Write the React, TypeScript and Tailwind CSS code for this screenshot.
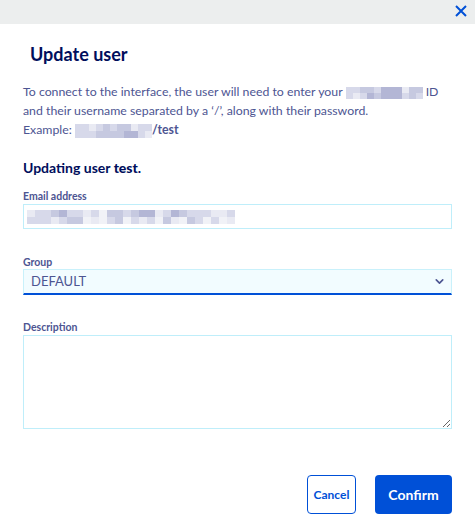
import { ChevronDown } from 'lucide-react'

// pixelated placeholder cells (redacted content)
const SHADES = ['bg-[#e9eaf3]', 'bg-[#d7d9ea]', 'bg-[#c6c9e0]', 'bg-[#b3b6d5]', 'bg-[#f1f2f7]']

function Redacted({ rows, cell }: { rows: number[][]; cell: string }) {
  return (
    <span className="inline-flex flex-col align-middle">
      {rows.map((row, r) => (
        <span key={r} className="flex">
          {row.map((c, i) => (
            <span key={i} className={`${cell} ${SHADES[c]}`} />
          ))}
        </span>
      ))}
    </span>
  )
}

const ID_ROWS = [
  [1, 1, 2, 2, 1, 3, 3, 3, 0, 2, 2],
  [1, 0, 1, 3, 2, 3, 3, 3, 1, 2, 1],
]
const EXAMPLE_ROWS = [
  [1, 1, 0, 1, 2, 1, 2, 2, 0, 1, 1],
  [1, 1, 1, 2, 2, 2, 2, 3, 3, 1, 0],
]
const EMAIL_ROWS = [
  [0, 1, 1, 2, 3, 1, 1, 0, 1, 4, 2, 2, 1, 2, 3, 3, 0, 1, 3, 2, 1, 1, 1, 0, 0, 1],
  [1, 1, 1, 0, 1, 2, 2, 4, 0, 4, 1, 2, 4, 1, 0, 1, 4, 2, 0, 4, 2, 1, 4, 1, 4, 0],
]

export default function App() {
  return (
    <div className="w-[475px] h-[531px] bg-white font-['Lato','Liberation_Sans',sans-serif] text-[#4d5592]">
      {/* top bar */}
      <div className="h-6 bg-[#eceeee] flex justify-end items-center pr-[8px]">
        <svg width="12" height="12" viewBox="0 0 12 12" className="text-[#0050d7] -mt-[3px]">
          <path d="M1 1 L11 11 M11 1 L1 11" stroke="currentColor" strokeWidth="2" />
        </svg>
      </div>

      <div className="px-[23px]">
        <h2 className="mt-[18px] pl-[7px] text-[18px] leading-6 font-bold text-[#000e5c]">Update user</h2>

        <p className="mt-4 text-[12.3px] leading-[19px] whitespace-nowrap">
          To connect to the interface, the user will need to enter your{' '}
          <Redacted rows={ID_ROWS} cell="w-[7px] h-[6px]" /> ID
          <br />
          and their username separated by a ‘/’, along with their password.
          <br />
          Example: <Redacted rows={EXAMPLE_ROWS} cell="w-[7px] h-[7px]" />
          <span className="font-bold">/test</span>
        </p>

        <h3 className="mt-[19px] text-[14px] leading-5 font-bold text-[#000e5c]">
          Updating user <span className="font-black">test</span>.
        </h3>

        <label className="block mt-[11px] text-[10.5px] leading-[14px] font-bold">Email address</label>
        <div className="mt-px h-[25px] border border-[#bfeefa] flex items-center pl-[3px]">
          <Redacted rows={EMAIL_ROWS} cell="w-[8px] h-[7px]" />
        </div>

        <label className="block mt-[26px] text-[10.5px] leading-[14px] font-bold">Group</label>
        <div className="h-[26px] border border-[#c9f1fb] border-b-2 border-b-[#0050d7] bg-[#f2fcff] flex items-center justify-between pl-[7px] pr-[5px]">
          <span className="text-[13px] text-[#4d5592]">DEFAULT</span>
          <ChevronDown size={13} strokeWidth={3} className="text-[#4d5592]" />
        </div>

        <label className="block mt-[25px] text-[10.5px] leading-[14px] font-bold">Description</label>
        <textarea className="mt-px block w-full h-[94px] border border-[#bfeefa] outline-none resize-y" />

        <div className="mt-[46px] flex justify-end gap-[19px]">
          <button className="w-[49px] h-[39px] rounded-[4px] border-[1.5px] border-[#0050d7] text-[#0050d7] text-[12px] font-bold">
            Cancel
          </button>
          <button className="w-[77px] h-[39px] rounded-[4px] bg-[#0050d7] text-white text-[14px] font-bold">
            Confirm
          </button>
        </div>
      </div>
    </div>
  )
}
